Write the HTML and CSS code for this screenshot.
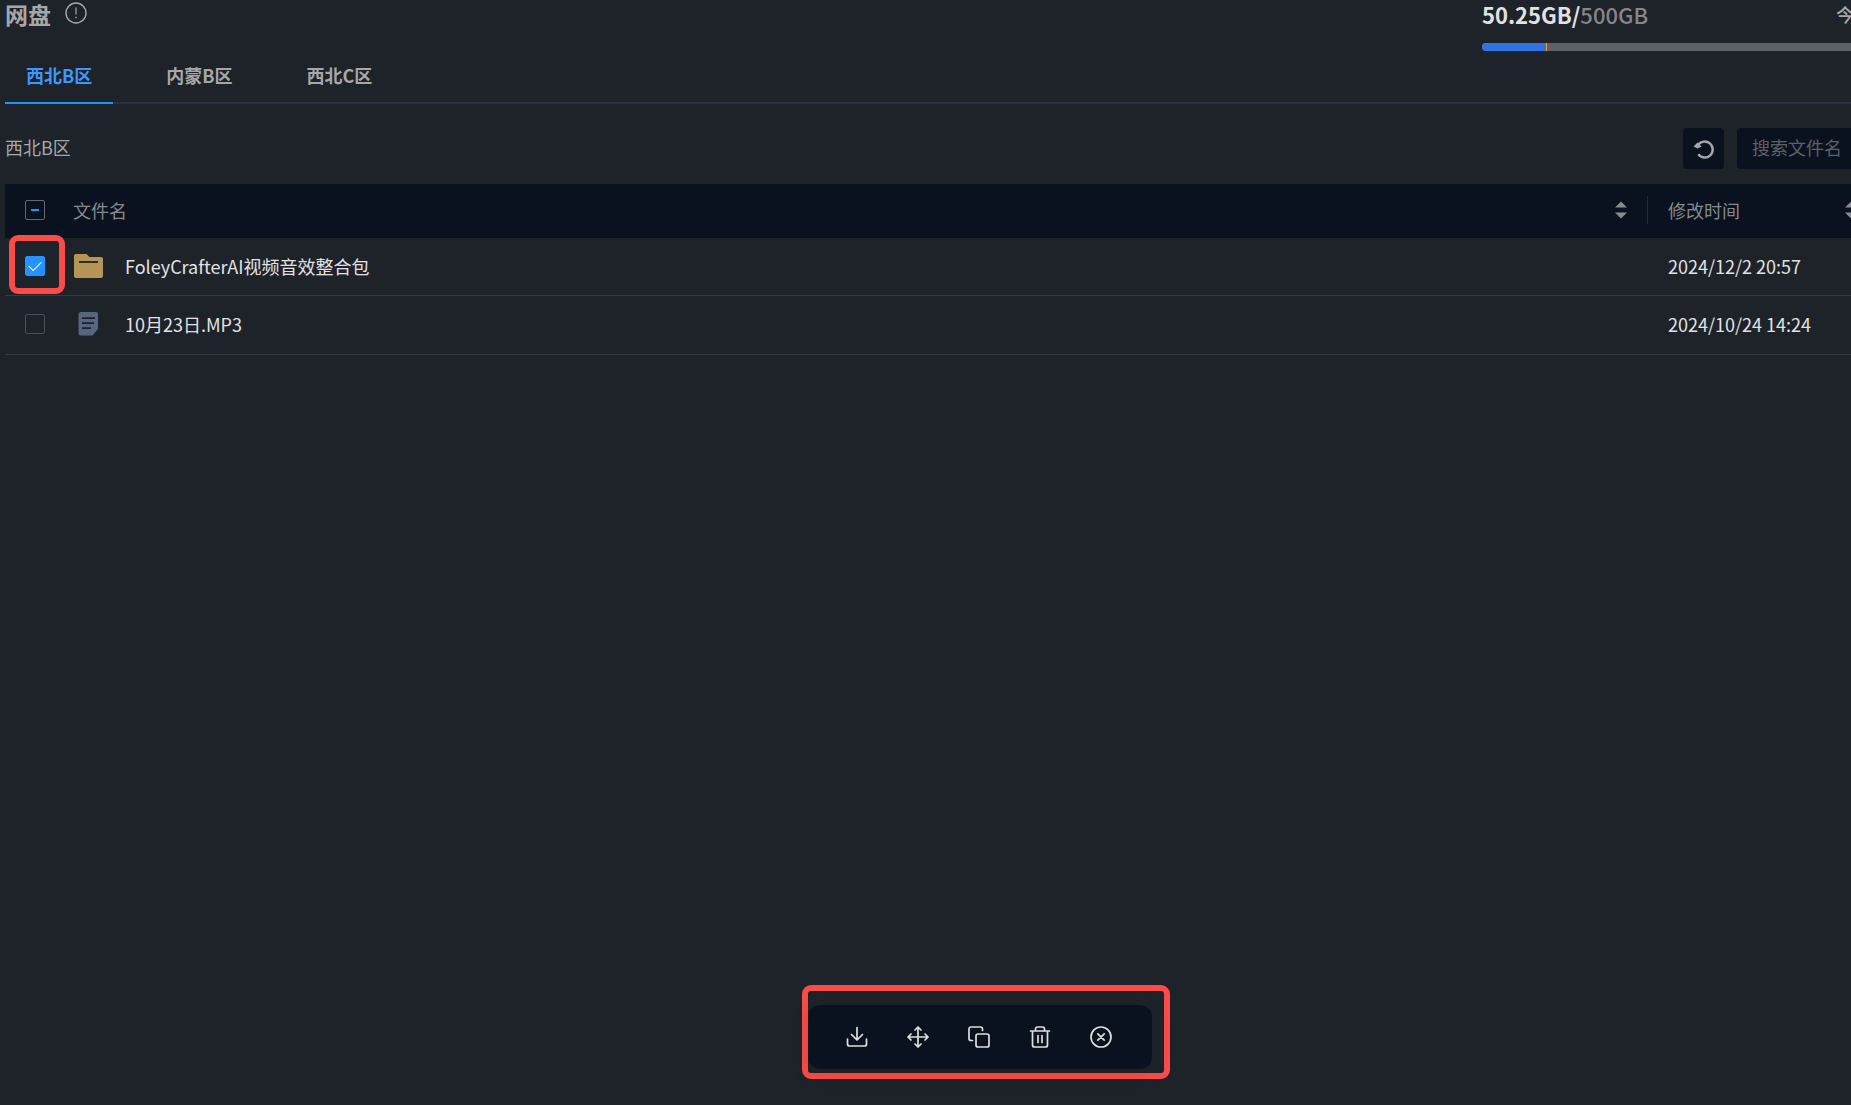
FILE: index.html
```html
<!DOCTYPE html>
<html lang="zh-CN">
<head>
<meta charset="utf-8">
<meta name="viewport" content="width=device-width, initial-scale=1">
<title>网盘</title>
<link rel="stylesheet" href="styles.css">
</head>
<body>
<main class="page">
  <header class="header">
    <div class="heading">
      <h1 class="title">网盘</h1>
      <button class="info" type="button" aria-label="说明">
        <svg width="22" height="22" viewBox="0 0 22 22" fill="none" stroke="currentColor"><circle cx="11" cy="11" r="10" stroke-width="1.4"/><path d="M11 5.5v7" stroke-width="1.2"/><path d="M11 14.8v1.5" stroke-width="1.4"/></svg>
      </button>
    </div>
    <section class="storage">
      <div class="quota">
        <p class="usage">50.25GB/<span class="total">500GB</span></p>
        <span class="today">今</span>
      </div>
      <div class="meter"><span class="meter-used"></span></div>
    </section>
  </header>

  <nav class="tabs">
    <button class="tab tab-active" type="button">西北B区</button>
    <button class="tab" type="button">内蒙B区</button>
    <button class="tab" type="button">西北C区</button>
  </nav>

  <div class="toolbar">
    <span class="crumb">西北B区</span>
    <button class="refresh" type="button" aria-label="刷新">
      <svg width="22" height="22" viewBox="0 0 22 22" fill="none" stroke="currentColor"><path d="M5 7.2A8 8 0 1 1 5.3 16.3" stroke-width="2.4"/><path d="M.6 8.4 4.4 4.4l4.2 4.2-4 1.8z" fill="currentColor" stroke="none"/></svg>
    </button>
    <input class="search" type="text" placeholder="搜索文件名" aria-label="搜索文件名">
  </div>

  <table class="files">
    <thead>
      <tr>
        <th class="col-check"><input class="check check-partial" type="checkbox" aria-label="全选"></th>
        <th class="col-name">
          <div class="head-cell"><span>文件名</span>
            <button class="sort" type="button" aria-label="按文件名排序"><svg width="12" height="18" viewBox="0 0 12 18" fill="currentColor"><path d="M0 6.500 6 .5l6 6zM0 11.500h12l-6 6z"/></svg></button>
          </div>
        </th>
        <th class="col-date">
          <div class="head-cell"><span>修改时间</span>
            <button class="sort" type="button" aria-label="按修改时间排序"><svg width="12" height="18" viewBox="0 0 12 18" fill="currentColor"><path d="M0 6.500 6 .5l6 6zM0 11.500h12l-6 6z"/></svg></button>
          </div>
        </th>
      </tr>
    </thead>
    <tbody>
      <tr>
        <td class="col-check"><span class="pick"><input class="check" type="checkbox" checked aria-label="选择 FoleyCrafterAI视频音效整合包"><span class="highlight"></span></span></td>
        <td class="col-name">
          <div class="file">
            <svg width="31" height="26" viewBox="0 0 31 26"><path d="M3 1h10.500l3 3H28a2 2 0 0 1 2 2v17a2 2 0 0 1-2 2H3a2 2 0 0 1-2-2V3a2 2 0 0 1 2-2z" fill="#b59657"/><path d="M6 9h19" stroke="#1e2229" stroke-width="1.800"/></svg>
            <span>FoleyCrafterAI视频音效整合包</span>
          </div>
        </td>
        <td class="col-date">2024/12/2 20:57</td>
      </tr>
      <tr>
        <td class="col-check"><input class="check" type="checkbox" aria-label="选择 10月23日.MP3"></td>
        <td class="col-name">
          <div class="file">
            <svg width="31" height="26" viewBox="0 0 31 26"><path d="M8 1h15a2 2 0 0 1 2 2v15l-5.500 6.500H8a2.500 2.500 0 0 1-2.500-2.500V3.500A2.500 2.500 0 0 1 8 1z" fill="#566680"/><path d="M9 7.200h13M9 12.200h12M9 17.200h9" stroke="#1e2229" stroke-width="1.800"/></svg>
            <span>10月23日.MP3</span>
          </div>
        </td>
        <td class="col-date">2024/10/24 14:24</td>
      </tr>
    </tbody>
  </table>

  <div class="dock">
    <div class="actions">
      <button class="action" type="button" aria-label="下载"><svg viewBox="0 0 22 22"><path d="M11 1.500v12M5.500 8.500l5.500 5.500 5.500-5.500M1.500 13v5a2 2 0 0 0 2 2h15a2 2 0 0 0 2-2v-5"/></svg></button>
      <button class="action" type="button" aria-label="移动"><svg viewBox="0 0 22 22"><path d="M11 1v20M1 11h20M8 4l3-3 3 3M8 18l3 3 3-3M4 8l-3 3 3 3M18 8l3 3-3 3"/></svg></button>
      <button class="action" type="button" aria-label="复制"><svg viewBox="0 0 22 22"><path d="M14.500 4.500V3a2 2 0 0 0-2-2H3a2 2 0 0 0-2 2v9.500a2 2 0 0 0 2 2h1.500"/><rect x="8" y="8" width="13" height="13" rx="2"/></svg></button>
      <button class="action" type="button" aria-label="删除"><svg viewBox="0 0 22 22"><path d="M1.500 5h19M6.500 5V3a2 2 0 0 1 2-2h5a2 2 0 0 1 2 2v2M3.500 5v14a2 2 0 0 0 2 2h11a2 2 0 0 0 2-2V5M9 9.500v7M13 9.500v7"/></svg></button>
      <button class="action" type="button" aria-label="取消"><svg viewBox="0 0 22 22"><circle cx="11" cy="11" r="10"/><path d="m7.800 7.800 6.400 6.400M14.200 7.800l-6.400 6.400"/></svg></button>
    </div>
  </div>
</main>
</body>
</html>
```
FILE: styles.css
```css
* {
  box-sizing: border-box;
}

body {
  margin: 0;
  background: #1e2229;
  color: #a6a7a9;
  font: 18px/26px "Noto Sans CJK SC", sans-serif;
}

button {
  padding: 0;
  border: 0;
  background: none;
  color: inherit;
  font: inherit;
  cursor: pointer;
}

svg {
  display: block;
}

.page {
  min-height: 100vh;
  padding-left: 5px;
  overflow: hidden;
}

/* Header */

.header {
  display: flex;
  justify-content: space-between;
  height: 52px;
}

.heading {
  display: flex;
  align-items: flex-start;
  gap: 14px;
}

.title {
  margin: 0;
  font-size: 23px;
  line-height: 28px;
  font-weight: 700;
}

.info {
  margin-top: 2px;
}

.storage {
  width: 372px;
  margin-right: -3px;
}

.quota {
  display: flex;
  justify-content: space-between;
  line-height: 28px;
}

.usage {
  margin: 0;
  font-size: 22px;
  font-weight: 700;
  color: #e2e2e3;
}

.total {
  font-weight: 500;
  color: #85878a;
}

.today {
  font-weight: 500;
}

.meter {
  height: 8px;
  margin-top: 15px;
  border-radius: 4px;
  background: #5f6168;
  overflow: hidden;
}

.meter-used {
  display: block;
  width: 65px;
  height: 8px;
  border-right: 1px solid #f0a020;
  background: #3273e3;
}

/* Region tabs */

.tabs {
  display: flex;
  gap: 32px;
  height: 52px;
  border-bottom: 2px solid #28323e;
}

.tab {
  height: 52px;
  padding: 0 21px 5px;
  border-bottom: 2px solid transparent;
  font-weight: 700;
}

.tab-active {
  border-bottom-color: #2492ff;
  color: #3d97ff;
}

/* Path and search */

.toolbar {
  display: flex;
  align-items: center;
  gap: 13px;
  padding: 24px 0 15px;
}

.crumb {
  flex: 1;
  padding-bottom: 4px;
}

.refresh {
  display: grid;
  place-items: center;
  width: 41px;
  height: 41px;
  border-radius: 4px;
  background: #0b121f;
}

.search {
  width: 214px;
  height: 41px;
  margin-right: -100px;
  padding: 0 15px 4px;
  border: 0;
  border-radius: 4px;
  background: #0b121f;
  color: #e2e2e3;
  font: inherit;
}

.search::placeholder {
  color: #5c6169;
}

/* File table */

.files {
  width: calc(100% + 26px);
  table-layout: fixed;
  border-collapse: separate;
  border-spacing: 0;
}

.files th {
  height: 54px;
  padding: 0 0 2px;
  background: #0b121f;
  color: #85898f;
  font-weight: 400;
  text-align: left;
}

.files td {
  height: 59px;
  padding: 0 0 2px;
  border-bottom: 1px solid #38393b;
  color: #e2e2e3;
}

.files tbody tr:first-child td {
  height: 58px;
}

.files .col-check {
  width: 60px;
  text-align: center;
}

.files .col-name {
  padding-left: 8px;
}

.files .col-date {
  width: 229px;
  padding-left: 20px;
}

.head-cell {
  display: flex;
  align-items: center;
  justify-content: space-between;
  height: 28px;
  padding-right: 20px;
}

.col-name .head-cell {
  border-right: 1px solid #222a35;
}

.sort {
  color: #888c91;
}

.check {
  appearance: none;
  display: block;
  width: 20px;
  height: 20px;
  margin: 0 auto;
  border: 1px solid #4d4f53;
  border-radius: 2px;
}

.check-partial {
  border-color: #62676f;
  background: linear-gradient(#2492ff, #2492ff) center / 8px 2px no-repeat;
}

.check:checked {
  display: grid;
  place-items: center;
  border-color: #2492ff;
  background: #2492ff;
}

.check:checked::before {
  content: "";
  width: 11px;
  height: 6px;
  margin-bottom: 3px;
  border-bottom: 1px solid #fff;
  border-left: 1px solid #fff;
  transform: rotate(-45deg);
}

.pick {
  position: relative;
  display: block;
}

.highlight {
  position: absolute;
  top: -21px;
  left: 4px;
  width: 56px;
  height: 59px;
  border: 6px solid #f94b48;
  border-radius: 9px;
  pointer-events: none;
}

.file {
  display: flex;
  align-items: center;
  gap: 21px;
}

/* Floating batch actions */

.dock {
  position: fixed;
  bottom: 26px;
  left: calc(50% + 60px);
  width: 368px;
  padding: 14px 12px 4px 0;
  border: 6px solid #f94b48;
  border-radius: 9px;
  transform: translateX(-50%);
}

.actions {
  display: flex;
  align-items: center;
  gap: 39px;
  height: 64px;
  padding-left: 38px;
  border-radius: 12px;
  background: #0b121f;
  box-shadow: 0 4px 20px rgba(0, 0, 0, 0.1);
}

.action {
  width: 22px;
  height: 22px;
  color: #dedfe0;
}

.action svg {
  width: 22px;
  height: 22px;
  fill: none;
  stroke: currentColor;
  stroke-width: 1.7;
  stroke-linecap: round;
  stroke-linejoin: round;
}
```
